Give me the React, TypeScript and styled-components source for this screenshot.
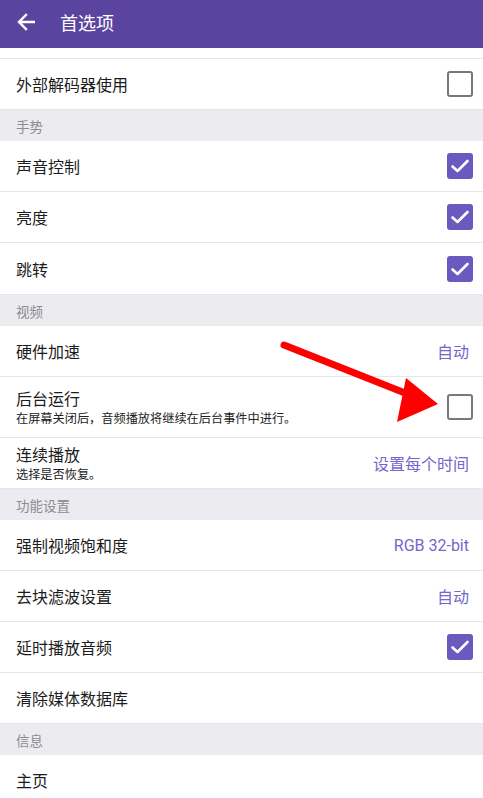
import React from "react"
import styled, {createGlobalStyle} from "styled-components"

const GlobalStyle = createGlobalStyle`
    body {
        margin: 0;
        background: #ffffff;
        font-family: Roboto, "Noto Sans CJK SC", sans-serif;
    }
`

const Page = styled.div`
    position: relative;
    width: 483px;
    height: 798px;
    overflow: hidden;
    background: #ffffff;
`

const TopBar = styled.div`
    height: 48px;
    background: #5b44a0;
    display: flex;
    align-items: flex-start;
    padding: 12px 0 0 16px;
    box-sizing: border-box;
    color: #ffffff;
`

const BackButton = styled.div`
    width: 20px;
    height: 20px;
    display: flex;
    align-items: center;
    justify-content: center;
    margin-right: 24px;
`

const Title = styled.div`
    font-size: 18px;
    line-height: 20px;
    font-family: "Noto Sans CJK SC", sans-serif;
`

const Stub = styled.div`
    height: 10px;
    border-bottom: 1px solid #e6e6ea;
`

const SectionHeader = styled.div`
    height: 31px;
    background: #ebebf0;
    display: flex;
    align-items: center;
    padding-left: 16px;
    font-size: 13.5px;
    color: #8c8c90;
    font-family: "Noto Sans CJK SC", sans-serif;
`

const Row = styled.div<{ readonly $height: number }>`
    height: ${({$height}) => $height}px;
    display: flex;
    align-items: center;
    padding: 0 10px 0 16px;
    border-bottom: 1px solid #e6e6ea;
    box-sizing: content-box;
`

const Texts = styled.div`
    flex: 1;
    display: flex;
    flex-direction: column;
`

const RowTitle = styled.div`
    font-size: 16px;
    line-height: 20px;
    color: #1c1c1c;
    font-family: "Noto Sans CJK SC", sans-serif;
`

const RowSubtitle = styled.div`
    font-size: 12.2px;
    line-height: 16px;
    color: #222222;
    margin-top: 2px;
    font-family: "Noto Sans CJK SC", sans-serif;
`

const Value = styled.div`
    font-size: 16px;
    color: #7466cc;
    margin-right: 4px;
    font-family: Roboto, "Noto Sans CJK SC", sans-serif;
`

const Box = styled.div<{ readonly $checked: boolean }>`
    width: 26px;
    height: 26px;
    box-sizing: border-box;
    border-radius: 3px;
    border: ${({$checked}) => $checked ? "none" : "2px solid #787878"};
    background: ${({$checked}) => $checked ? "#6a5abf" : "transparent"};
    display: flex;
    align-items: center;
    justify-content: center;
`

const Pointer = styled.svg`
    position: absolute;
    left: 0;
    top: 0;
    pointer-events: none;
`

const Check = ({checked}: { readonly checked: boolean }) => <Box $checked={checked}>
    {checked && <svg width="26" height="26" viewBox="0 0 26 26">
        <path d="M5.5 13.5 L10.5 18 L20.5 8" fill="none" stroke="#ffffff" strokeWidth="2.6" strokeLinecap="round" strokeLinejoin="round"/>
    </svg>}
</Box>

type Item = {
    readonly title: string
    readonly subtitle?: string
    readonly value?: string
    readonly checked?: boolean
    readonly height?: number
}

type Group = {
    readonly header?: string
    readonly items: ReadonlyArray<Item>
}

const groups: ReadonlyArray<Group> = [
    {items: [{title: "外部解码器使用", checked: false}]},
    {header: "手势", items: [
        {title: "声音控制", checked: true},
        {title: "亮度", checked: true},
        {title: "跳转", checked: true, height: 51},
    ]},
    {header: "视频", items: [
        {title: "硬件加速", value: "自动"},
        {title: "后台运行", subtitle: "在屏幕关闭后，音频播放将继续在后台事件中进行。", checked: false, height: 60},
        {title: "连续播放", subtitle: "选择是否恢复。", value: "设置每个时间"},
    ]},
    {header: "功能设置", items: [
        {title: "强制视频饱和度", value: "RGB 32-bit"},
        {title: "去块滤波设置", value: "自动"},
        {title: "延时播放音频", checked: true},
        {title: "清除媒体数据库"},
    ]},
    {header: "信息", items: [
        {title: "主页"},
    ]},
]

const PreferenceRow = ({item}: { readonly item: Item }) =>
    <Row $height={item.height ?? 50}>
        <Texts>
            <RowTitle>{item.title}</RowTitle>
            {item.subtitle && <RowSubtitle>{item.subtitle}</RowSubtitle>}
        </Texts>
        {item.value && <Value>{item.value}</Value>}
        {item.checked !== undefined && <Check checked={item.checked}/>}
    </Row>

export default function App() {
    return <Page>
        <GlobalStyle/>
        <TopBar>
            <BackButton>
                <svg width="18" height="18" viewBox="0 0 18 18">
                    <path d="M17 9 H2.5 M9 2 L2 9 L9 16" fill="none" stroke="#ffffff" strokeWidth="2.4" strokeLinecap="square"/>
                </svg>
            </BackButton>
            <Title>首选项</Title>
        </TopBar>
        <Stub/>
        {groups.map((group, gi) => <React.Fragment key={gi}>
            {group.header && <SectionHeader>{group.header}</SectionHeader>}
            {group.items.map(item => <PreferenceRow key={item.title} item={item}/>)}
        </React.Fragment>)}
        <Pointer width="483" height="798" viewBox="0 0 483 798">
            <line x1="284" y1="345" x2="410" y2="395" stroke="#ff0000" strokeWidth="7" strokeLinecap="round"/>
            <polygon points="406,378 438,404 397,422" fill="#ff0000"/>
        </Pointer>
    </Page>
}
